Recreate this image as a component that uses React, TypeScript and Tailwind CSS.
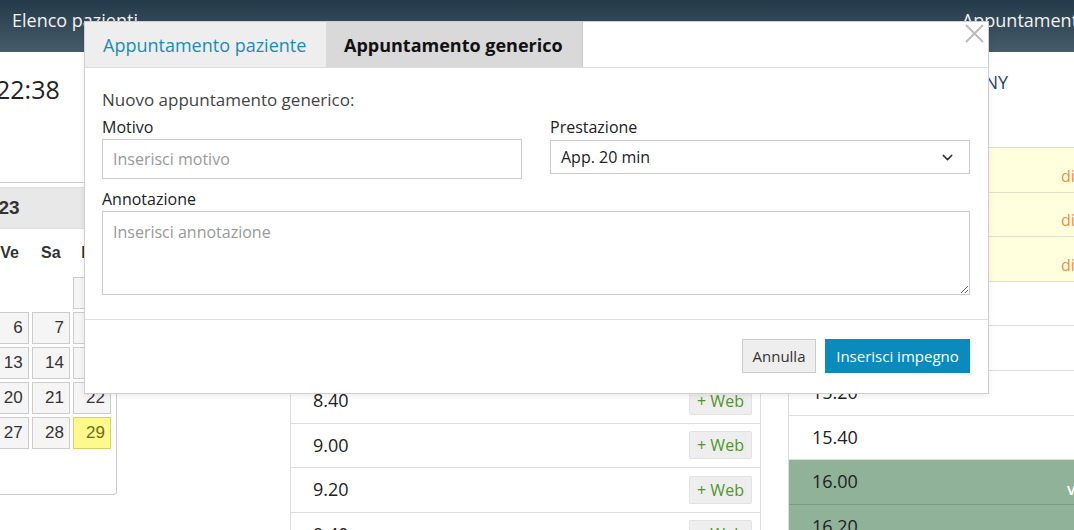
import { ChevronDown } from "lucide-react";

const calRows: (number | null)[][] = [
  [null, null, null, null, null, null, 1],
  [2, 3, 4, 5, 6, 7, 8],
  [9, 10, 11, 12, 13, 14, 15],
  [16, 17, 18, 19, 20, 21, 22],
  [23, 24, 25, 26, 27, 28, 29],
  [30, 31, null, null, null, null, null],
];

const dayNames = ["Lu", "Ma", "Me", "Gi", "Ve", "Sa", "Do"];

const middleSlots = ["6.40", "7.00", "7.20", "7.40", "8.00", "8.20", "8.40", "9.00", "9.20", "9.40"];

const rightSlots = [
  { time: "13.40", kind: "busy" },
  { time: "14.00", kind: "busy" },
  { time: "14.20", kind: "busy" },
  { time: "14.40", kind: "free" },
  { time: "15.00", kind: "free" },
  { time: "15.20", kind: "free" },
  { time: "15.40", kind: "free" },
  { time: "16.00", kind: "done" },
  { time: "16.20", kind: "done" },
];

function Calendar() {
  return (
    <div className="w-[117px] overflow-hidden">
      <div className="ml-[-4px] mt-[17px] h-[40px] text-[25px] leading-[40px] text-[#222]">22:38</div>
      <div className="mt-[73px] h-[313px] border-t border-r border-b border-[#ccc] rounded-br-[4px] flex justify-end pr-[5px] pt-[4px]">
        <div className="w-[285px] shrink-0 font-['Liberation_Sans',Arial,sans-serif]">
          <div className="h-[42px] bg-[#e8e8e8] border-y border-[#ddd] flex items-center justify-center text-[19px] font-bold text-[#333] pr-[14px]">
            Ottobre 2023
          </div>
          <div className="grid grid-cols-7 gap-x-[3px] h-[48px] items-center">
            {dayNames.map((d) => (
              <div key={d} className="text-center text-[16px] font-bold text-[#333]">
                {d}
              </div>
            ))}
          </div>
          <div className="grid grid-cols-7 gap-x-[3px] gap-y-[3px]">
            {calRows.flat().map((n, i) =>
              n === null ? (
                <div key={i} className="h-[32px]" />
              ) : (
                <div
                  key={i}
                  className={`h-[32px] border text-right pr-[5px] text-[17px] leading-[30px] ${
                    n === 29 ? "bg-[#fdf98d] border-[#d8cf63] text-[#766c12]" : "bg-[#f5f5f5] border-[#ccc] text-[#333]"
                  }`}
                >
                  {n}
                </div>
              )
            )}
          </div>
        </div>
      </div>
    </div>
  );
}

function MiddleColumn() {
  return (
    <div className="ml-[173px] w-[471px] border-x border-[#ddd] pt-[60px]">
      {middleSlots.map((t) => (
        <div key={t} className="h-[44.5px] border-b border-[#ddd] flex items-center pl-[22px] pr-[8px]">
          <span className="text-[18px] text-[#222]">{t}</span>
          <span className="ml-auto h-[28px] w-[63px] rounded-[2px] bg-[#eeeeee] border border-[#e2e2e2] text-[16px] leading-[26px] text-center text-[#4f962c]">
            + Web
          </span>
        </div>
      ))}
    </div>
  );
}

function RightColumn() {
  return (
    <div className="ml-[27px] flex-1 border-l border-[#ddd] min-w-0">
      <div className="h-[96px] border-b border-[#ddd] pr-[66px] text-right pt-[17px] text-[18px] text-[#2a4468] whitespace-nowrap">
        DOTT. ANTHONY
      </div>
      {rightSlots.map((s) => (
        <div
          key={s.time}
          className={`h-[44.6px] border-b flex items-center pl-[23px] whitespace-nowrap ${
            s.kind === "busy"
              ? "bg-[#ffffde] border-[#e0e0cc]"
              : s.kind === "done"
              ? "bg-[#8fb298] border-[#7b9c83]"
              : "bg-white border-[#ddd]"
          }`}
        >
          <span className="w-[249px] shrink-0 text-[18px] text-[#222]">{s.time}</span>
          {s.kind === "busy" && <span className="pt-[12px] text-[16px] text-[#e8914a]">disponibile</span>}
          {s.kind === "done" && <span className="pt-[14px] pl-[6px] text-[16px] text-white font-semibold">visita</span>}
        </div>
      ))}
    </div>
  );
}

function Modal() {
  return (
    <div className="absolute left-[84px] top-[21px] w-[905px] h-[373px] bg-white border border-[#cfcfcf] shadow-[0_2px_6px_rgba(0,0,0,0.08)]">
      <div className="h-[46px] border-b border-[#ddd] flex relative">
        <div className="w-[241px] bg-[#eeeeee] pl-[18px] text-[18px] leading-[46px] text-[#1a8cbb]">Appuntamento paziente</div>
        <div className="w-[257px] bg-[#d9d9d9] border-r border-[#c9c9c9] pl-[18px] text-[18px] leading-[46px] font-bold text-[#111]">
          Appuntamento generico
        </div>
        <button className="absolute right-[4px] top-[1px] w-[20px] h-[20px] flex items-center justify-center">
          <svg width="19" height="19" viewBox="0 0 19 19" fill="none" stroke="#bbbbbb" strokeWidth="2">
            <path d="M1 1 L18 18 M18 1 L1 18" />
          </svg>
        </button>
      </div>
      <div className="pl-[17px] pr-[18px] pt-[21px]">
        <div className="text-[17px] leading-[22px] text-[#444]">Nuovo appuntamento generico:</div>
        <div className="mt-[5px] grid grid-cols-2 gap-x-[28px]">
          <div>
            <div className="text-[16px] leading-[22px] text-[#222]">Motivo</div>
            <input
              placeholder="Inserisci motivo"
              className="mt-[1px] w-full h-[40px] border border-[#ccc] px-[10px] text-[16px] text-[#333] placeholder:text-[#999] outline-none"
            />
          </div>
          <div>
            <div className="text-[16px] leading-[22px] text-[#222]">Prestazione</div>
            <div className="mt-[2px] h-[34px] border border-[#ccc] flex items-center pl-[10px] pr-[13px] text-[16px] text-[#222]">
              App. 20 min
              <ChevronDown className="ml-auto text-[#333]" size={17} strokeWidth={2} />
            </div>
          </div>
        </div>
        <div className="mt-[9px] text-[16px] leading-[22px] text-[#222]">Annotazione</div>
        <textarea
          placeholder="Inserisci annotazione"
          className="mt-[1px] block w-full h-[84px] border border-[#ccc] px-[10px] py-[8px] text-[16px] text-[#333] placeholder:text-[#999] outline-none"
        />
      </div>
      <div className="mt-[24px] border-t border-[#ddd] flex justify-end gap-[9px] pt-[19px] pr-[18px]">
        <button className="h-[34px] w-[74px] bg-[#eeeeee] border border-[#ccc] text-[15px] text-[#333]">Annulla</button>
        <button className="h-[34px] w-[145px] bg-[#0a8abd] text-[15px] text-white">Inserisci impegno</button>
      </div>
    </div>
  );
}

export default function App() {
  return (
    <div className="relative w-[1074px] h-[530px] overflow-hidden bg-white font-['Open_Sans','Noto_Sans',sans-serif]">
      <div className="h-[52px] bg-gradient-to-b from-[#243a4a] to-[#475c6a] flex items-start pt-[7px] pl-[12px] text-[18px] text-[#f2f2f2] overflow-hidden whitespace-nowrap">
        <span>Elenco pazienti</span>
        <span className="ml-[824px] shrink-0">Appuntamenti</span>
      </div>
      <div className="flex">
        <Calendar />
        <MiddleColumn />
        <RightColumn />
      </div>
      <Modal />
    </div>
  );
}
